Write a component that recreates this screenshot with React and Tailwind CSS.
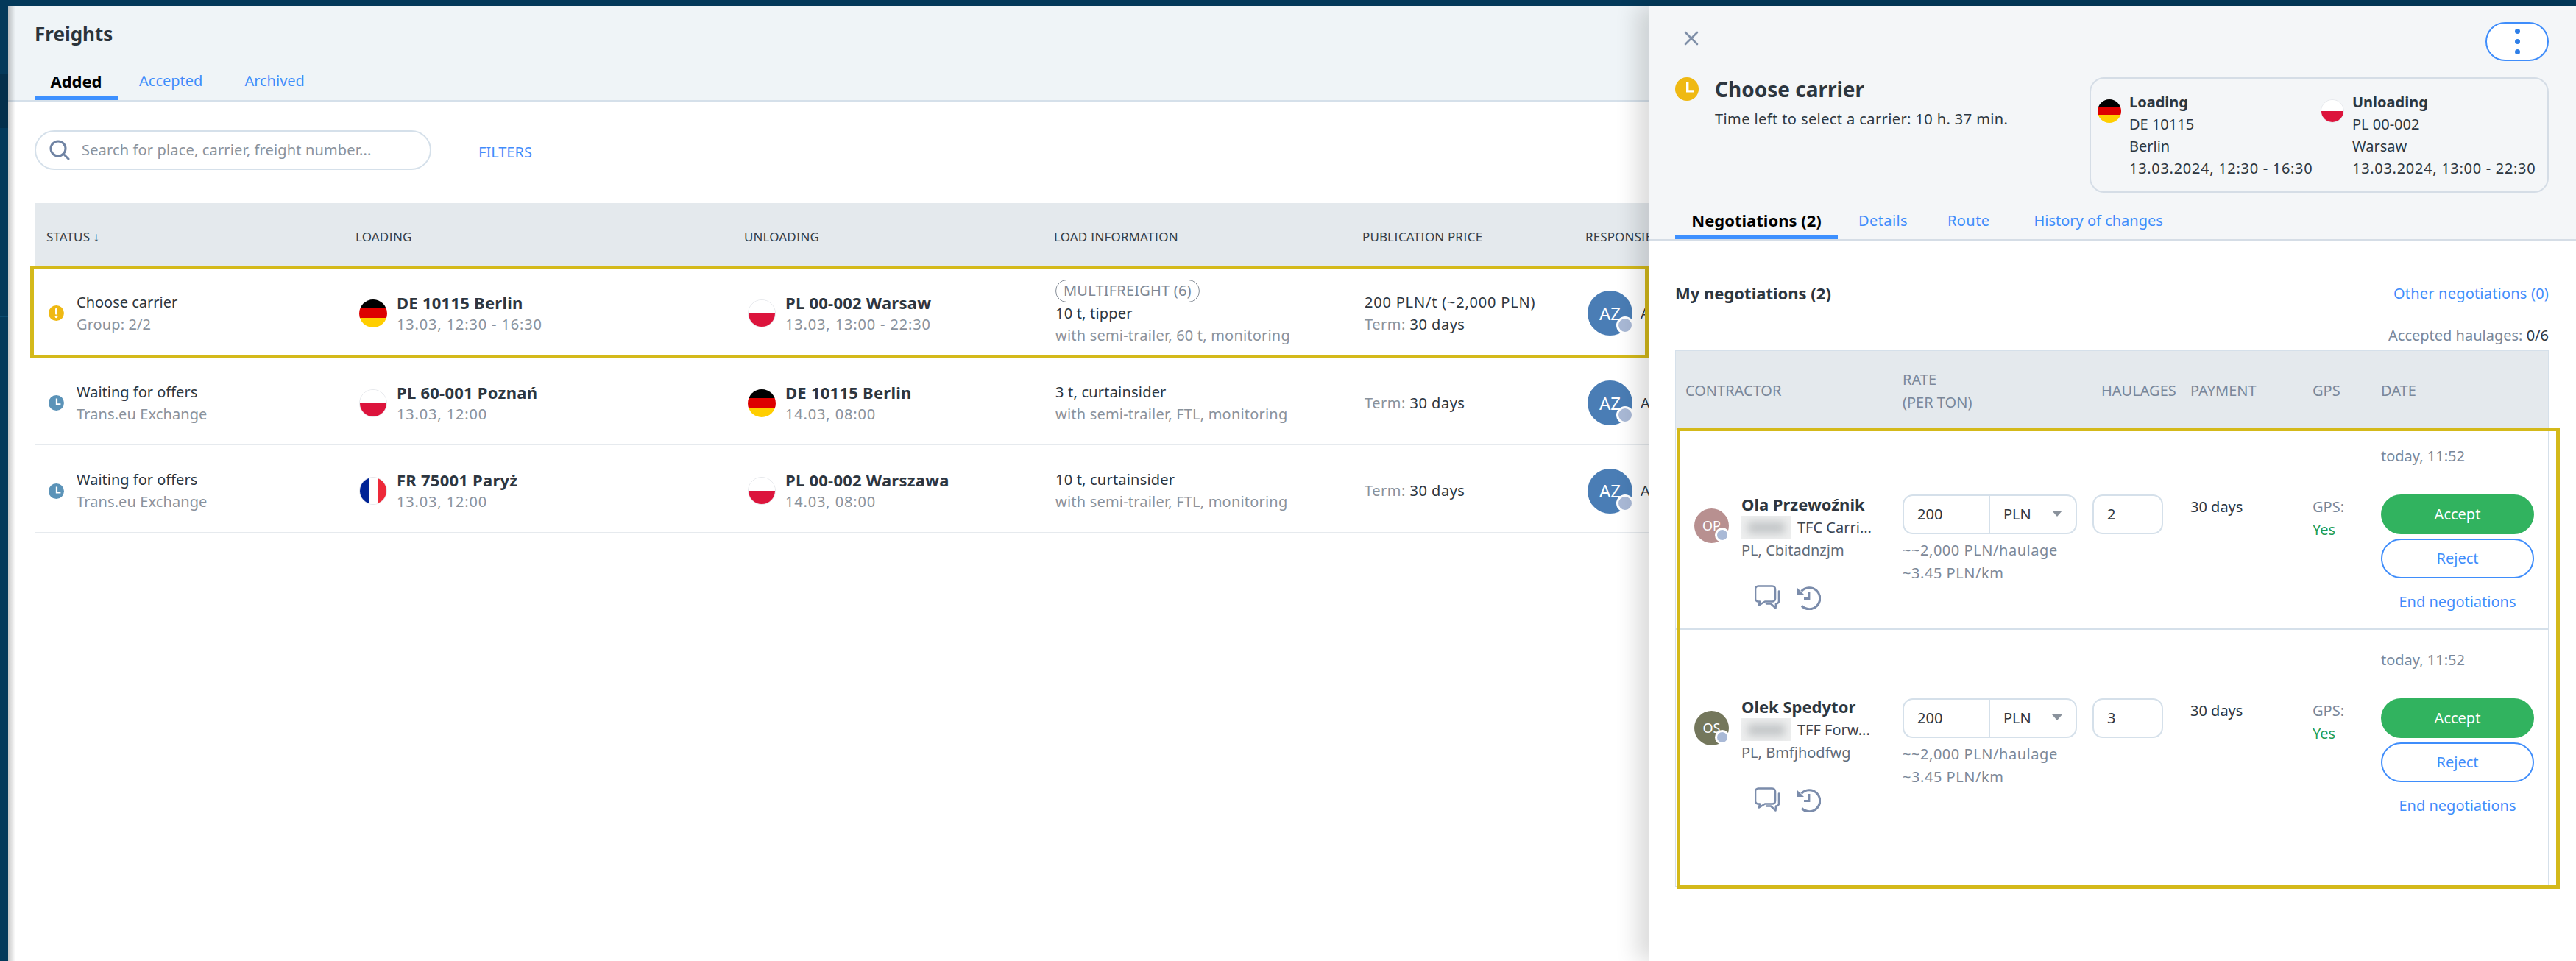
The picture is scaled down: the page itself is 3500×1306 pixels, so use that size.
import React from "react";

const Flag = ({ c, size = "w-[38px] h-[38px]" }) => {
  const cols = {
    de: (
      <div className={`${size} rounded-full overflow-hidden flex flex-col shrink-0`}>
        <div className="flex-1 bg-[#000000]" />
        <div className="flex-1 bg-[#dd0000]" />
        <div className="flex-1 bg-[#ffce00]" />
      </div>
    ),
    pl: (
      <div className={`${size} rounded-full overflow-hidden flex flex-col shrink-0 border border-[#e6e8ec]`}>
        <div className="flex-1 bg-white" />
        <div className="flex-1 bg-[#dc143c]" />
      </div>
    ),
    fr: (
      <div className={`${size} rounded-full overflow-hidden flex shrink-0 border border-[#e6e8ec]`}>
        <div className="flex-1 bg-[#002395]" />
        <div className="flex-1 bg-white" />
        <div className="flex-1 bg-[#ed2939]" />
      </div>
    ),
  };
  return cols[c];
};

const ClockIcon = ({ color, className }) => (
  <svg viewBox="0 0 32 32" className={className}>
    <circle cx="16" cy="16" r="16" fill={color} />
    <path d="M15 7h3.4v10.2H25v3.2H15z" fill="#fff" />
  </svg>
);

const AlertIcon = () => (
  <svg viewBox="0 0 21 21" className="w-[21px] h-[21px] shrink-0">
    <circle cx="10.5" cy="10.5" r="10.5" fill="#efb913" />
    <rect x="9" y="4" width="3" height="8.5" rx="1" fill="#fff" />
    <circle cx="10.5" cy="15.5" r="1.8" fill="#fff" />
  </svg>
);

const ChatIcon = () => (
  <svg viewBox="0 0 35 34" className="w-[35px] h-[34px]" fill="none" stroke="#7b8cab" strokeWidth="2.6" strokeLinejoin="round" strokeLinecap="round">
    <path d="M5 1.5h19a4 4 0 0 1 4 4v13a4 4 0 0 1-4 4H14l-8 5 1-5H5a4 4 0 0 1-4-4v-13a4 4 0 0 1 4-4z" />
    <path d="M33 8.5v13a4 4 0 0 1-4 4l-.5 6-6.5-6h-6" />
  </svg>
);

const HistoryIcon = () => (
  <svg viewBox="0 0 34 34" className="w-[34px] h-[34px]" fill="none" stroke="#7b8cab" strokeWidth="3.2">
    <path d="M7.5 8.5A14.5 14.5 0 1 1 8 28.5" />
    <path d="M1 3v10h10z" fill="#7b8cab" stroke="none" />
    <path d="M18 9v9.5h-7" strokeWidth="2.8" />
  </svg>
);

const Avatar = ({ text, bg, box, font, badge }) => (
  <div className={`relative ${box} rounded-full flex items-center justify-center text-white shrink-0 ${font}`} style={{ background: bg }}>
    <span>{text}</span>
    <span className={`absolute ${badge} rounded-full bg-[#a9b9d6] border-[3px] border-white`} />
  </div>
);

const Frame = ({ className }) => (
  <div className={`absolute border-[5px] border-[#d4b91a] pointer-events-none z-[5] ${className}`} />
);

const rows = [
  {
    h: "h-[125px]",
    icon: <AlertIcon />,
    s1: "Choose carrier",
    s2: "Group: 2/2",
    f1: "de",
    l1: "DE 10115 Berlin",
    l2: "13.03, 12:30 - 16:30",
    f2: "pl",
    u1: "PL 00-002 Warsaw",
    u2: "13.03, 13:00 - 22:30",
    tag: "MULTIFREIGHT (6)",
    i1: "10 t, tipper",
    i2: "with semi-trailer, 60 t, monitoring",
    price: "200 PLN/t (~2,000 PLN)",
  },
  {
    h: "h-[119px]",
    s1: "Waiting for offers",
    s2: "Trans.eu Exchange",
    f1: "pl",
    l1: "PL 60-001 Poznań",
    l2: "13.03, 12:00",
    f2: "de",
    u1: "DE 10115 Berlin",
    u2: "14.03, 08:00",
    i1: "3 t, curtainsider",
    i2: "with semi-trailer, FTL, monitoring",
  },
  {
    h: "h-[120px]",
    s1: "Waiting for offers",
    s2: "Trans.eu Exchange",
    f1: "fr",
    l1: "FR 75001 Paryż",
    l2: "13.03, 12:00",
    f2: "pl",
    u1: "PL 00-002 Warszawa",
    u2: "14.03, 08:00",
    i1: "10 t, curtainsider",
    i2: "with semi-trailer, FTL, monitoring",
  },
];

const cols = "grid grid-cols-[420px_528px_421px_419px_303px_minmax(0,1fr)]";

const Place = ({ flag, a, b }) => (
  <div className="flex items-center pl-[20px] gap-[13px]">
    <Flag c={flag} />
    <div className="leading-[30px]">
      <div className="font-bold text-[22px] tracking-[0.25px] text-[#2d3640] whitespace-nowrap">{a}</div>
      <div className="text-[#8a929c] whitespace-nowrap tracking-[0.85px]">{b}</div>
    </div>
  </div>
);

const LeftPane = () => (
  <div className="w-[2229px] shrink-0 bg-white relative">
    <div className="absolute left-0 top-0 bottom-0 w-[10px] bg-linear-to-r from-[#00000038] to-transparent z-[6]" />
    <div className="h-[130px] bg-[#eff4f7] border-b-2 border-[#d5e0ea] pl-[36px] flex flex-col justify-between">
      <div className="pt-[22px] text-[26px] leading-[32px] font-bold text-[#2b333b]">Freights</div>
      <div className="flex items-end text-[20px] text-[#3f8dfb]">
        <div className="w-[113px] h-[40px] border-b-[6px] border-[#3d90ff] text-center font-bold text-[22px] text-black leading-[28px]">Added</div>
        <div className="ml-[29px] h-[40px] leading-[28px]">Accepted</div>
        <div className="ml-[57px] h-[40px] leading-[28px]">Archived</div>
      </div>
    </div>
    <div className="pl-[36px] pt-[39px] flex items-center h-[93px]">
      <div className="w-[539px] h-[54px] rounded-full border-2 border-[#d5e0ea] flex items-center pl-[18px] gap-[16px] text-[20px] tracking-[0.15px] text-[#8a929c]">
        <svg viewBox="0 0 28 28" className="w-[28px] h-[28px] shrink-0" fill="none" stroke="#6f83a3" strokeWidth="3" strokeLinecap="round">
          <circle cx="12" cy="12" r="10" />
          <path d="M19 19l7 7" />
        </svg>
        <span>Search for place, carrier, freight number...</span>
      </div>
      <div className="ml-[64px] mt-[6px] text-[20px] text-[#3f8dfb]">FILTERS</div>
    </div>
    <div className="ml-[36px] mt-[45px] relative">
      <div className={`${cols} h-[85px] bg-[#e4e9ed] items-center text-[17px] tracking-[0.1px] text-[#333d47] pt-[6px]`}>
        <div className="pl-[16px]">STATUS ↓</div>
        <div className="pl-[16px]">LOADING</div>
        <div className="pl-[16px]">UNLOADING</div>
        <div className="pl-[16px]">LOAD INFORMATION</div>
        <div className="pl-[16px] whitespace-nowrap">PUBLICATION PRICE</div>
        <div className="pl-[16px] whitespace-nowrap">RESPONSIBLE</div>
      </div>
    </div>
    <div className="ml-[36px] text-[20px] border-l border-[#e8ecf0] relative">
      <Frame className="left-[-7px] top-0 w-[2199px] h-[126px]" />
      {rows.map((r, i) => (
        <div key={i} className={`${cols} ${r.h} items-center border-b-2 border-[#e6eaee] pt-[6px]`}>
          <div className="flex items-center pl-[18px] gap-[17px]">
            {r.icon || <ClockIcon color="#5b93b8" className="w-[21px] h-[21px] shrink-0" />}
            <div className="leading-[30px]">
              <div className="text-[#2d3640]">{r.s1}</div>
              <div className="text-[#8a929c] tracking-[0.1px]">{r.s2}</div>
            </div>
          </div>
          <Place flag={r.f1} a={r.l1} b={r.l2} />
          <Place flag={r.f2} a={r.u1} b={r.u2} />
          <div className="pl-[17px] leading-[30px] tracking-[0.2px]">
            {r.tag && (
              <div className="inline-block h-[31px] leading-[28px] px-[10px] rounded-full border border-[#868e98] text-[#7d8794]">{r.tag}</div>
            )}
            <div className="text-[#2d3640]">{r.i1}</div>
            <div className="text-[#8a929c] whitespace-nowrap">{r.i2}</div>
          </div>
          <div className="pl-[18px] leading-[30px] whitespace-nowrap">
            {r.price && <div className="text-[#2d3640] tracking-[0.8px]">{r.price}</div>}
            <div className="tracking-[0.5px]">
              <span className="text-[#8a929c]">Term: </span>
              <span className="text-[#2d3640]">30 days</span>
            </div>
          </div>
          <div className="pl-[18px] flex items-center gap-[11px]">
            <Avatar text="AZ" bg="#4a7db5" box="w-[61px] h-[61px]" font="text-[24px]" badge="right-[-2px] bottom-[2px] w-[24px] h-[24px]" />
            <span className="text-[#2d3640]">A</span>
          </div>
        </div>
      ))}
    </div>
  </div>
);

const negotiations = [
  { name: "Ola Przewoźnik", ini: "OP", bg: "#b89090", co: "TFC Carri...", city: "PL, Cbitadnzjm", n: "2", h: "h-[272px]", pt: "pt-[24px]", namePt: "pt-[62px]" },
  { name: "Olek Spedytor", ini: "OS", bg: "#74775c", co: "TFF Forw...", city: "PL, Bmfjhodfwg", n: "3", h: "h-[348px]", pt: "pt-[29px]", namePt: "pt-[60px]" },
];

const negCols = "grid grid-cols-[308px_271px_120px_166px_93px_minmax(0,1fr)]";

const NegRow = ({ d, last }) => (
  <div className={`${negCols} ${d.h} ${d.pt} ${last ? "" : "border-b-2 border-[#d5e0ea]"} text-[18px] relative`}>
    <div className={`pl-[25px] ${d.namePt} flex`}>
      <div className="mt-[21px]">
        <Avatar text={d.ini} bg={d.bg} box="w-[47px] h-[47px]" font="text-[18px]" badge="right-[-1px] bottom-[1px] w-[20px] h-[20px] border-[2px]" />
      </div>
      <div className="ml-[17px] leading-[31px]">
        <div className="font-bold text-[#2d3640] text-[22px] whitespace-nowrap">{d.name}</div>
        <div className="flex items-center gap-[9px] text-[#3b4652] text-[20px] whitespace-nowrap">
          <div className="w-[67px] h-[31px] bg-[#eeefef] overflow-hidden flex items-center justify-center">
            <div className="w-[50px] h-[16px] bg-[#c2c5c7] blur-[6px]" />
          </div>
          <span>{d.co}</span>
        </div>
        <div className="text-[#5f6b78] text-[20px]">{d.city}</div>
        <div className="flex items-center mt-[32px] ml-[18px] gap-[21px]">
          <ChatIcon />
          <HistoryIcon />
        </div>
      </div>
    </div>
    <div className="pt-[64px]">
      <div className="flex w-[237px] h-[54px] border-2 border-[#d5e0ea] rounded-[14px] text-[20px] text-[#2d3640] items-center">
        <div className="w-[115px] pl-[18px]">200</div>
        <div className="flex-1 h-full border-l-2 border-[#d5e0ea] pl-[18px] flex items-center justify-between pr-[18px]">
          PLN
          <span className="w-0 h-0 border-l-[7px] border-r-[7px] border-t-[8px] border-l-transparent border-r-transparent border-t-[#8a929c] mb-[2px]" />
        </div>
      </div>
      <div className="mt-[6px] text-[20px] leading-[31px] tracking-[0.55px] text-[#7c8898] whitespace-nowrap">
        <div>~~2,000 PLN/haulage</div>
        <div>~3.45 PLN/km</div>
      </div>
    </div>
    <div className="pt-[64px]">
      <div className="w-[96px] h-[54px] border-2 border-[#d5e0ea] rounded-[14px] flex items-center pl-[18px] text-[20px] text-[#2d3640] -ml-[13px]">{d.n}</div>
    </div>
    <div className="pt-[65px] text-[20px] leading-[32px] text-[#2d3640] whitespace-nowrap">30 days</div>
    <div className="pt-[65px] text-[20px] leading-[31px]">
      <div className="text-[#79879a]">GPS:</div>
      <div className="text-[#1f9d55]">Yes</div>
    </div>
    <div className="w-[220px] text-[20px]">
      <div className="text-[#79879a] leading-[28px] -mt-[2px] whitespace-nowrap">today, 11:52</div>
      <div className="mt-[38px] h-[54px] rounded-full bg-[#31b35f] text-white flex items-center justify-center w-[208px]">Accept</div>
      <div className="mt-[6px] h-[54px] rounded-full border-2 border-[#3f8dfb] text-[#3f8dfb] flex items-center justify-center w-[208px]">Reject</div>
      <div className="mt-[18px] leading-[28px] text-[#3f8dfb] text-center w-[208px]">End negotiations</div>
    </div>
  </div>
);

const Panel = () => (
  <div className="w-[1260px] shrink-0 bg-white relative z-10 shadow-[-16px_0_28px_rgba(0,0,0,0.14)]">
    <div className="h-[319px] bg-[#f4f6f8] border-b-2 border-[#d5dde6] pl-[36px] pr-[37px] flex flex-col relative text-[20px] text-[#2d3640]">
      <div className="flex justify-between pt-[22px] h-[97px]">
        <svg viewBox="0 0 20 20" className="w-[20px] h-[20px] ml-[12px] mt-[12px]" fill="none" stroke="#7f8fa8" strokeWidth="2.6" strokeLinecap="round">
          <path d="M2 2l16 16M18 2L2 18" />
        </svg>
        <div className="w-[86px] h-[53px] rounded-full border-2 border-[#3f8dfb] bg-white flex flex-col items-center justify-center gap-[7px]">
          <span className="w-[7px] h-[7px] rounded-full bg-[#2f7fe8]" />
          <span className="w-[7px] h-[7px] rounded-full bg-[#2f7fe8]" />
          <span className="w-[7px] h-[7px] rounded-full bg-[#2f7fe8]" />
        </div>
      </div>
      <div className="flex justify-between">
        <div className="flex gap-[22px]">
          <ClockIcon color="#efb913" className="w-[32px] h-[32px] shrink-0" />
          <div>
            <div className="text-[28px] leading-[32px] font-bold text-[#2d3640]">Choose carrier</div>
            <div className="mt-[10px] leading-[30px] whitespace-nowrap tracking-[0.4px]">Time left to select a carrier: 10 h. 37 min.</div>
          </div>
        </div>
        <div className="w-[624px] h-[157px] border-2 border-[#d5dde6] rounded-[20px] flex pt-[17px] pl-[9px] leading-[30px] whitespace-nowrap">
          <div className="w-[303px] flex gap-[11px]">
            <div className="pt-[11px]"><Flag c="de" size="w-[32px] h-[32px]" /></div>
            <div>
              <div className="font-bold">Loading</div>
              <div>DE 10115</div>
              <div>Berlin</div>
              <div className="tracking-[0.7px]">13.03.2024, 12:30 - 16:30</div>
            </div>
          </div>
          <div className="flex gap-[11px]">
            <div className="pt-[11px]"><Flag c="pl" size="w-[32px] h-[32px]" /></div>
            <div>
              <div className="font-bold">Unloading</div>
              <div>PL 00-002</div>
              <div>Warsaw</div>
              <div className="tracking-[0.7px]">13.03.2024, 13:00 - 22:30</div>
            </div>
          </div>
        </div>
      </div>
      <div className="absolute left-[36px] bottom-0 flex items-end text-[20px] text-[#3f8dfb] h-[50px]">
        <div className="w-[221px] h-[50px] border-b-[6px] border-[#3d90ff] text-center font-bold text-[22px] text-black leading-[48px]">Negotiations (2)</div>
        <div className="ml-[28px] h-[50px] leading-[50px] tracking-[0.4px]">Details</div>
        <div className="ml-[54px] h-[50px] leading-[50px] tracking-[0.4px]">Route</div>
        <div className="ml-[60px] h-[50px] leading-[50px]">History of changes</div>
      </div>
    </div>
    <div className="px-[36px] pr-[37px] text-[20px]">
      <div className="flex justify-between mt-[57px] leading-[30px]">
        <div className="font-bold text-[22px] leading-[28px] text-[#2d3640]">My negotiations (2)</div>
        <div className="text-[#3f8dfb] tracking-[0.2px]">Other negotiations (0)</div>
      </div>
      <div className="text-right mt-[27px] leading-[30px]">
        <span className="text-[#79879a]">Accepted haulages: </span>
        <span className="text-[#2d3640]">0/6</span>
      </div>
      <div className="mt-[5px] border border-[#d5e0ea] relative">
        <Frame className="left-[1px] top-[104px] w-[1200px] h-[627px]" />
        <div className={`${negCols} h-[107px] bg-[#e4e9ed] items-center text-[20px] leading-[31px] text-[#79879a]`}>
          <div className="pl-[13px]">CONTRACTOR</div>
          <div><div>RATE</div><div>(PER TON)</div></div>
          <div className="whitespace-nowrap -ml-[1px]">HAULAGES</div>
          <div>PAYMENT</div>
          <div>GPS</div>
          <div>DATE</div>
        </div>
        {negotiations.map((d, i) => (
          <NegRow key={i} d={d} last={i === 1} />
        ))}
      </div>
    </div>
  </div>
);

const Rail = () => (
  <div className="w-[11px] shrink-0 flex flex-col -mt-[8px]">
    <div className="h-[100px]" />
    <div className="h-[74px] bg-[#032f4b]" />
    <div className="h-[255px]" />
    <div className="h-[2px] bg-[#0a4a6f]" />
  </div>
);

export default function App() {
  return (
    <div className="w-[3500px] h-[1306px] overflow-hidden bg-[#03395a] pt-[8px] flex [font-family:'Noto_Sans',sans-serif]">
      <Rail />
      <LeftPane />
      <Panel />
    </div>
  );
}
